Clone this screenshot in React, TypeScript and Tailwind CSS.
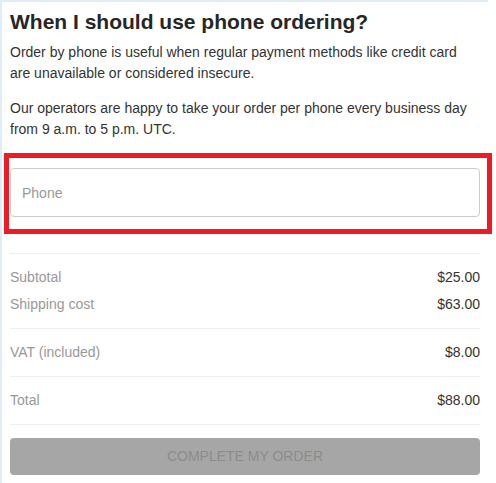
import React from "react";

const Row = ({ label, value }: { label: string; value: string }) => (
  <div className="flex h-[27px] items-center justify-between text-[14px]">
    <span className="text-[#999999]">{label}</span>
    <span className="text-[#333333]">{value}</span>
  </div>
);

export default function App() {
  return (
    <div
      className="relative h-[483px] w-[496px] bg-white"
      style={{ fontFamily: '"Liberation Sans", Arial, sans-serif' }}
    >
      <div className="h-[483px] w-[488px] border-l-2 border-t-2 border-[#deedf7] bg-white px-[8px] pt-[8px]">
        <h2 className="text-[21px] font-bold leading-[24px] text-[#262626]">
          When I should use phone ordering?
        </h2>
        <p className="mt-[8px] text-[14px] leading-[21px] text-[#333333]">
          Order by phone is useful when regular payment methods like credit card
          are unavailable or considered insecure.
        </p>
        <p className="mt-[14px] text-[14px] leading-[21px] text-[#333333]">
          Our operators are happy to take your order per phone every business day
          from 9 a.m. to 5 p.m. UTC.
        </p>

        <input
          type="text"
          placeholder="Phone"
          className="mt-[28px] block h-[49px] w-full rounded-[4px] border border-[#cccccc] bg-white px-[11px] text-[14px] text-[#333333] outline-none placeholder:text-[#999999]"
        />

        <div className="mt-[36px] border-t border-[#eeeeee] py-[10px]">
          <Row label="Subtotal" value="$25.00" />
          <Row label="Shipping cost" value="$63.00" />
        </div>
        <div className="border-t border-[#eeeeee] py-[10px]">
          <Row label="VAT (included)" value="$8.00" />
        </div>
        <div className="border-t border-[#eeeeee] py-[10px]">
          <Row label="Total" value="$88.00" />
        </div>
        <div className="border-t border-[#eeeeee] pt-[13px]">
          <button
            disabled
            className="h-[37px] w-full rounded-[4px] bg-[#a6a6a6] text-[14px] uppercase text-[#8c8c8c]"
          >
            Complete my order
          </button>
        </div>
      </div>

      <div className="pointer-events-none absolute left-[4px] top-[153px] h-[81px] w-[488px] border-[5px] border-[#ed1c24]" />
    </div>
  );
}
